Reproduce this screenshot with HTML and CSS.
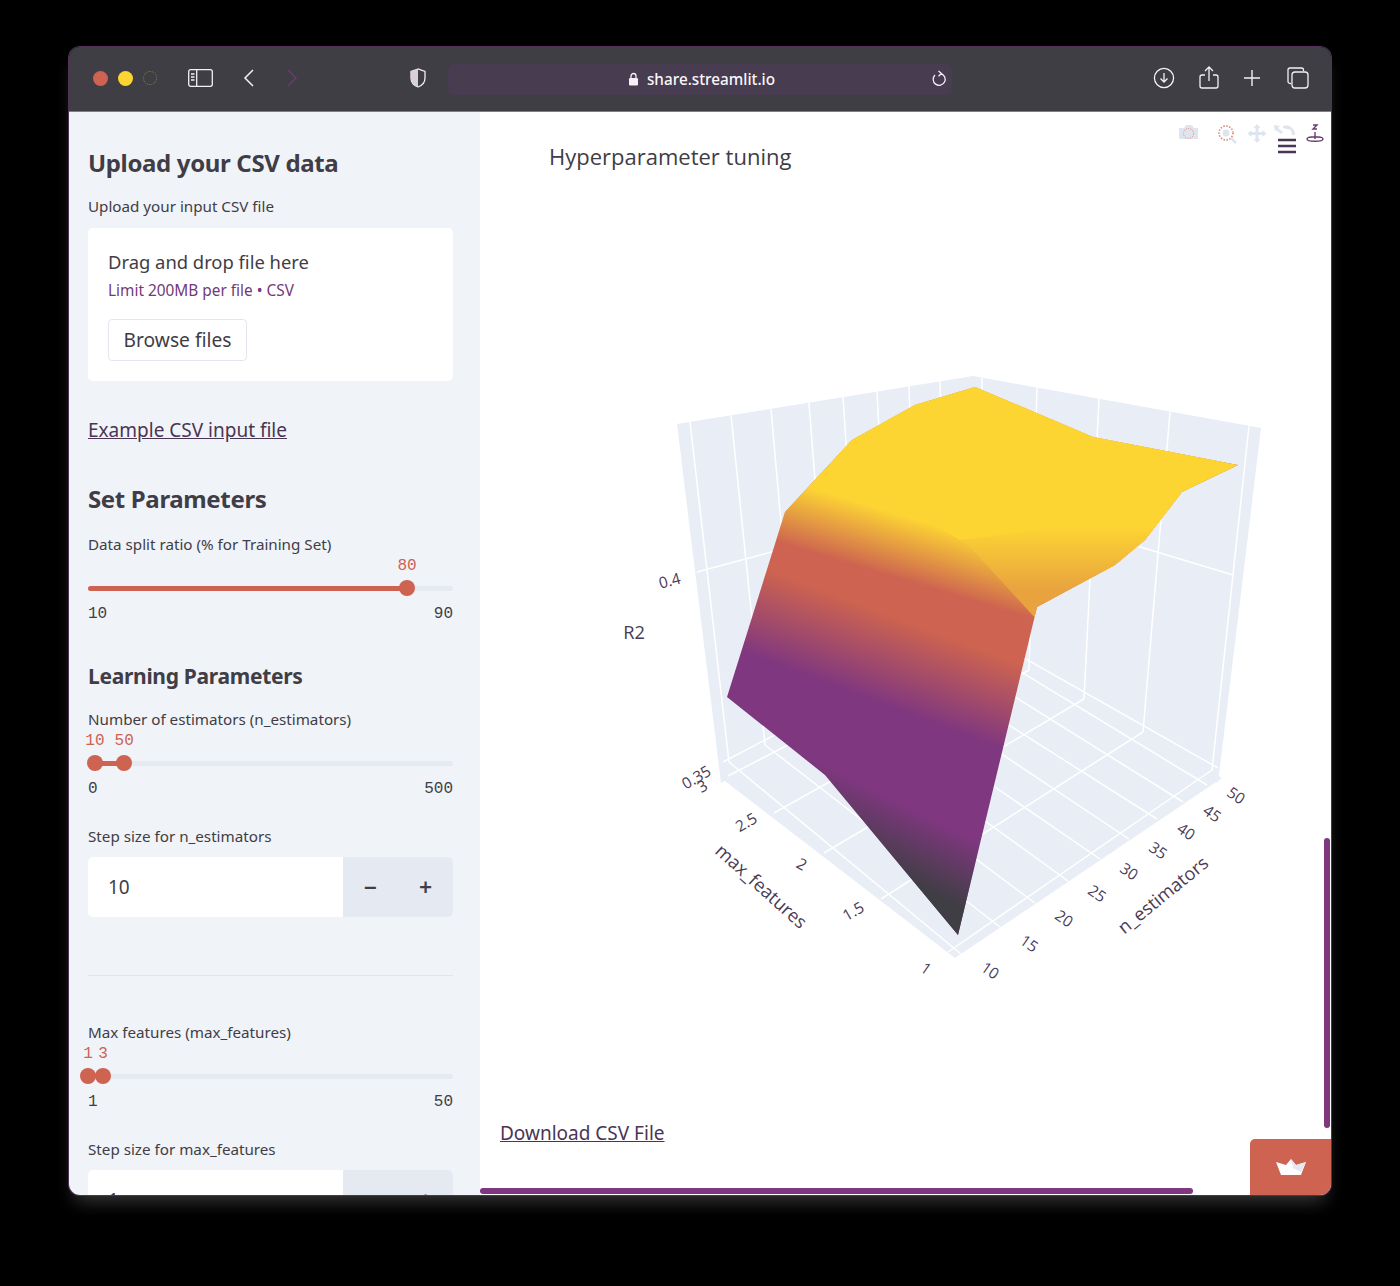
FILE: index.html
```html
<!DOCTYPE html>
<html lang="en">
<head>
<meta charset="utf-8">
<title>Hyperparameter tuning</title>
<link rel="stylesheet" href="styles.css">
</head>
<body>
<div class="window">
  <header class="toolbar">
    <div class="tb-left">
      <div class="traffic">
        <span class="dot dot-red"></span><span class="dot dot-yellow"></span><span class="dot dot-off"></span>
      </div>
      <svg class="ic ic-side" width="25" height="18" viewBox="0 0 25 18"><rect x=".7" y=".7" width="23.6" height="16.6" rx="2" fill="none" stroke="#f4f0f6" stroke-width="1.3"/><path d="M8.7 1v16M3 5h3.5M3 8h3.5M3 11h3.5" stroke="#f4f0f6" stroke-width="1.3" fill="none"/></svg>
      <svg class="ic ic-back" width="12" height="20" viewBox="0 0 12 20"><path d="M10 2 2 10l8 8" fill="none" stroke="#f4f0f6" stroke-width="1.5"/></svg>
      <svg class="ic ic-fwd" width="12" height="20" viewBox="0 0 12 20"><path d="m2 2 8 8-8 8" fill="none" stroke="#6a3a72" stroke-width="1.5"/></svg>
      <svg class="ic ic-shield" width="18" height="20" viewBox="0 0 18 20"><path d="M9 1 2 3.5V10c0 4.500 3 7.500 7 9 4-1.500 7-4.500 7-9V3.500z" fill="#3f3e44" stroke="#f4f0f6" stroke-width="1.3"/><path d="M9 1 2 3.500V10c0 4.500 3 7.500 7 9z" fill="#d9cfd8"/></svg>
    </div>
    <div class="address">
      <svg class="lock" width="11" height="14" viewBox="0 0 11 14"><path d="M3 6V4a2.500 2.500 0 0 1 5 0v2" fill="none" stroke="#f4f0f6" stroke-width="1.3"/><rect x="1" y="6" width="9" height="7.500" rx="1.200" fill="#f4f0f6"/></svg>
      <span class="host">share.streamlit.io</span>
      <svg class="reload" width="16" height="18" viewBox="0 0 16 18"><path d="M10 3.600A6 6 0 1 1 4 5M7.500 1 10.500 3.600 7.500 6.200" fill="none" stroke="#f4f0f6" stroke-width="1.300"/></svg>
    </div>
    <div class="tb-right">
      <svg width="22" height="22" viewBox="0 0 22 22"><circle cx="11" cy="11" r="9.600" fill="none" stroke="#f4f0f6" stroke-width="1.300"/><path d="M11 6v9M7.500 11.500 11 15l3.500-3.500" fill="none" stroke="#f4f0f6" stroke-width="1.300"/></svg>
      <svg width="20" height="24" viewBox="0 0 20 24"><path d="M6 9H3a2 2 0 0 0-2 2v9a2 2 0 0 0 2 2h14a2 2 0 0 0 2-2v-9a2 2 0 0 0-2-2h-3M10 15V1.500M6 5l4-4 4 4" fill="none" stroke="#f4f0f6" stroke-width="1.300"/></svg>
      <svg width="18" height="18" viewBox="0 0 18 18"><path d="M9 1v16M1 9h16" stroke="#f4f0f6" stroke-width="1.400"/></svg>
      <svg class="ic-tabs" width="22" height="22" viewBox="0 0 22 22"><path d="M4 16.500H3a2 2 0 0 1-2-2V3a2 2 0 0 1 2-2h11.500a2 2 0 0 1 2 2v1" fill="none" stroke="#f4f0f6" stroke-width="1.300"/><rect x="5" y="5" width="16" height="16" rx="3" fill="none" stroke="#f4f0f6" stroke-width="1.300"/></svg>
    </div>
  </header>

  <div class="content">
    <aside class="sidebar">
      <h2 class="h-upload">Upload your CSV data</h2>
      <p class="label label-upload">Upload your input CSV file</p>
      <div class="uploader">
        <div class="drag">Drag and drop file here</div>
        <div class="limit">Limit 200MB per file • CSV</div>
        <button class="browse" type="button">Browse files</button>
      </div>
      <a class="example" href="#">Example CSV input file</a>
      <h3 class="h-set">Set Parameters</h3>
      <p class="label label-split">Data split ratio (% for Training Set)</p>
      <div class="slider">
        <div class="values"><span class="val" style="left:87.4%">80</span></div>
        <div class="track">
          <span class="fill" style="left:0;width:87.4%"></span>
          <span class="thumb" style="left:87.4%"></span>
        </div>
        <div class="ends"><span>10</span><span>90</span></div>
      </div>
      <h3 class="h-learn">Learning Parameters</h3>
      <p class="label label-est">Number of estimators (n_estimators)</p>
      <div class="slider">
        <div class="values"><span class="val" style="left:1.9%">10</span><span class="val" style="left:9.9%">50</span></div>
        <div class="track">
          <span class="fill" style="left:1.9%;width:8%"></span>
          <span class="thumb" style="left:1.9%"></span>
          <span class="thumb" style="left:9.9%"></span>
        </div>
        <div class="ends"><span>0</span><span>500</span></div>
      </div>
      <p class="label label-step">Step size for n_estimators</p>
      <div class="number">
        <div class="num-value">10</div>
        <div class="num-btn">−</div>
        <div class="num-btn">+</div>
      </div>
      <hr class="rule">
      <p class="label label-max">Max features (max_features)</p>
      <div class="slider">
        <div class="values"><span class="val" style="left:0">1</span><span class="val" style="left:4.1%">3</span></div>
        <div class="track">
          <span class="thumb" style="left:0"></span>
          <span class="thumb" style="left:4.1%"></span>
        </div>
        <div class="ends"><span>1</span><span>50</span></div>
      </div>
      <p class="label label-step">Step size for max_features</p>
      <div class="number">
        <div class="num-value">1</div>
        <div class="num-btn">−</div>
        <div class="num-btn">+</div>
      </div>
    </aside>

    <main class="main">
      <svg class="plot" width="851" height="1000" viewBox="480 112 851 1000">
        <defs>
          <clipPath id="surf"><path d="M785 512 852 440 915 405 975 387 1093 437 1238 465 1182 492 1145 540 1115 565 1037 607 958 935 825 775 727 697Z"/></clipPath>
          <linearGradient id="gBody" gradientUnits="userSpaceOnUse" x1="880" y1="612" x2="850" y2="692">
            <stop offset="0" stop-color="#cd6350"/><stop offset="1" stop-color="#7f377f"/>
          </linearGradient>
          <linearGradient id="gTop" gradientUnits="userSpaceOnUse" x1="900" y1="514" x2="882" y2="574">
            <stop offset="0" stop-color="#fdd533"/><stop offset="1" stop-color="#fdd533" stop-opacity="0"/>
          </linearGradient>
          <linearGradient id="gRight" gradientUnits="userSpaceOnUse" x1="1060" y1="526" x2="1060" y2="590">
            <stop offset="0" stop-color="#fdd533"/><stop offset="1" stop-color="#e8a33f"/>
          </linearGradient>
          <linearGradient id="gDark" gradientUnits="userSpaceOnUse" x1="935" y1="820" x2="905" y2="880">
            <stop offset="0" stop-color="#3f3e44" stop-opacity="0"/><stop offset="1" stop-color="#3f3e44"/>
          </linearGradient>
        </defs>

        <g class="walls">
          <path d="M677 424 973 376 975 640 721 783Z"/>
          <path d="M973 376 1261 428 1218 783 975 640Z"/>
          <path d="M721 778 975 640 1222 778 955 958Z"/>
        </g>
        <g class="grid">
          <path d="M690 422 729 762M731 415 765 745M771 409 799 727M809 403 833 711M843 397 862 696M877 391 892 681M909 386 919 668M940 381 946 654"/>
          <path d="M982 378 982 644M1037 388 1029 670M1099 399 1084 699M1170 412 1143 732M1249 426 1212 770"/>
          <path d="M697 572 975 497 1233 575M723 762 975 630 1218 768"/>
          <path d="M961 954 729 762M1000 927 765 745M1035 903 799 727M1068 881 833 711M1100 859 862 696M1129 839 892 681M1157 819 919 668M1183 802 946 654M1207 785 972 642"/>
          <path d="M948 952 1212 770M881 899 1143 732M824 853 1084 699M774 813 1029 670M728 776 982 644"/>
        </g>

        <g clip-path="url(#surf)">
          <rect x="700" y="370" width="560" height="580" fill="url(#gBody)"/>
          <rect x="700" y="370" width="560" height="580" fill="url(#gTop)"/>
          <path d="M960 536 1250 500 1250 620 1037 620Z" fill="url(#gRight)"/>
          <rect x="700" y="700" width="300" height="250" fill="url(#gDark)"/>
          <path d="M834 465 850 483 854 500 895 502 960 540 1055 528 1142 528 1250 440 970 370 780 440Z" fill="#fdd533"/>
        </g>

        <text class="title" x="549" y="165">Hyperparameter tuning</text>

        <g class="tick">
          <text transform="translate(671 586) rotate(-15)">0.4</text>
          <text transform="translate(699 782) rotate(-30)">0.35</text>
          <text transform="translate(705 791) rotate(-30)">3</text>
          <text transform="translate(749 827) rotate(-30)">2.5</text>
          <text transform="translate(799 869) rotate(30)">2</text>
          <text transform="translate(856 916) rotate(-30)">1.5</text>
          <text transform="translate(923 973) rotate(35)">1</text>
          <text transform="translate(987 975) rotate(35)">10</text>
          <text transform="translate(1026 948) rotate(35)">15</text>
          <text transform="translate(1061 923) rotate(35)">20</text>
          <text transform="translate(1094 898) rotate(35)">25</text>
          <text transform="translate(1126 876) rotate(35)">30</text>
          <text transform="translate(1155 855) rotate(35)">35</text>
          <text transform="translate(1183 836) rotate(35)">40</text>
          <text transform="translate(1209 818) rotate(35)">45</text>
          <text transform="translate(1233 800) rotate(35)">50</text>
        </g>
        <g class="axis">
          <text x="634" y="639">R2</text>
          <text transform="translate(757 891) rotate(42)">max_features</text>
          <text transform="translate(1167 900) rotate(-39)">n_estimators</text>
        </g>

        <g class="modebar">
          <path d="M1179 128h5l2-3h6l2 3h4v11h-19z"/>
          <circle cx="1188.500" cy="133.500" r="5" fill="none" stroke="#d9836f" stroke-dasharray="1 1.500"/>
          <circle cx="1226" cy="133" r="7" fill="none" stroke="#d9836f" stroke-width="1.500" stroke-dasharray="1.500 1.500"/>
          <circle cx="1226" cy="133" r="3.500"/>
          <path d="M1231 138l5 5" stroke="#dfe5ee" stroke-width="2.500"/>
          <path d="M1257 124l3.500 4h-2v4h4v-2l4 3.500-4 3.500v-2h-4v4h2l-3.500 4-3.500-4h2v-4h-4v2l-4-3.500 4-3.500v2h4v-4h-2z"/>
          <path d="M1274 125l6 1-2 2 5 4-2 2-5-4-1 2zM1283 126a9 9 0 0 1 12 9h-3l-1-5-8-2z"/>
          <path class="turn" d="M1313 125h4l-4 4h4M1315 132v7M1307 139c0-3 16-3 16 0s-16 3-16 0z" fill="none" stroke="#6a3a72" stroke-width="1.400"/>
        </g>
        <path class="burger" d="M1278 140h18M1278 146h18M1278 152h18"/>
      </svg>
      <a class="download" href="#">Download CSV File</a>
      <span class="sb-v"></span>
      <span class="sb-h"></span>
      <div class="crown-btn">
        <svg width="32" height="18" viewBox="0 0 32 18"><path d="M1 4 11 7 16 1 21 7 31 4 26 17H6Z" fill="#fdfdfd"/><path d="M16 1 21 7 31 4 26 14 18 10Z" fill="#e4e8f0"/></svg>
      </div>
    </main>
  </div>
</div>
</body>
</html>
```
FILE: styles.css
```css
* { box-sizing: border-box; }
html, body { margin: 0; background: #000; }
body { padding: 47px 69px 91px; font-family: "Noto Sans", "Open Sans", sans-serif; color: #3f3d46; }

.window {
  width: 1262px;
  height: 1148px;
  border-radius: 11px;
  overflow: hidden;
  display: flex;
  flex-direction: column;
  box-shadow: 0 0 0 1px #52315a, 0 12px 18px -6px rgba(95, 95, 95, .6);
}

/* toolbar */
.toolbar {
  flex: none;
  height: 65px;
  background: #3f3e44;
  border-bottom: 1px solid #cd6350;
  display: grid;
  grid-template-columns: 379px 504px 1fr;
  align-items: center;
}
.tb-left { display: flex; align-items: center; padding: 0 0 2px 24px; }
.traffic { display: flex; gap: 10px; align-items: center; }
.dot { width: 15px; height: 15px; border-radius: 50%; }
.dot-red { background: #cd6350; }
.dot-yellow { background: #fdd533; }
.dot-off { border: 1px dotted #8a7a3a; width: 14px; height: 14px; }
.ic-side { margin-left: 31px; }
.ic-back { margin-left: 30px; }
.ic-fwd { margin-left: 31px; }
.ic-shield { margin-left: 111px; }
.address {
  position: relative;
  height: 31px;
  padding-left: 3px;
  background: #473c50;
  border-radius: 7px;
  display: flex;
  align-items: center;
  justify-content: center;
  gap: 8px;
  color: #f8f6fa;
  font-size: 15.300px;
  font-weight: 500;
}
.reload { position: absolute; right: 5px; top: 6px; }
.tb-right { display: flex; align-items: center; justify-content: flex-end; gap: 24px; padding: 0 22px 2px 0; }
.ic-tabs { margin-left: 2px; }

/* layout */
.content { flex: 1; display: flex; min-height: 0; }
.sidebar {
  flex: none;
  width: 411px;
  height: 100%;
  overflow: hidden;
  background: #f0f3f8;
  padding: 35px 27px 0 19px;
}
.main { flex: 1; position: relative; background: #fff; overflow: hidden; }

/* sidebar text */
h2, h3, p { margin: 0; }
h2, h3 { font-weight: 700; color: #3f3d46; }
.h-upload { font-size: 24px; line-height: 32px; letter-spacing: -.35px; }
.h-set { font-size: 24px; line-height: 30px; margin-top: 41px; letter-spacing: -.35px; }
.h-learn { font-size: 21px; line-height: 30px; margin-top: 37px; letter-spacing: -.3px; }
.label { font-size: 15.200px; line-height: 20px; }
.label-upload { margin-top: 17px; }
.label-split { margin-top: 20px; }
.label-est { margin-top: 18px; }
.label-step { margin-top: 27px; }
.label-max { margin-top: 46px; }

.uploader {
  margin-top: 12px;
  background: #fff;
  border-radius: 5px;
  padding: 21px 20px 20px;
}
.drag { font-size: 18.400px; line-height: 26px; }
.limit { font-size: 15.400px; line-height: 20px; margin-top: 6px; color: #73387a; }
.browse {
  display: block;
  margin-top: 18px;
  width: 139px;
  height: 42px;
  padding: 0;
  background: #fff;
  border: 1px solid #e3e6ec;
  border-radius: 4px;
  color: #3f3d46;
  font: 19.200px/1 "Noto Sans", sans-serif;
}
.example, .download {
  display: block;
  color: #4a3555;
  text-decoration: underline;
  font-size: 19px;
  line-height: 26px;
}
.example { margin-top: 36px; width: max-content; }

/* sliders */
.slider { margin-top: 1px; font-family: "Liberation Mono", monospace; font-size: 16px; }
.values { position: relative; height: 20px; }
.val { position: absolute; top: 1px; line-height: 20px; transform: translateX(-50%); color: #cd6350; }
.track { position: relative; height: 16px; margin-top: 5px; }
.track::before {
  content: "";
  position: absolute;
  left: 0; right: 0; top: 6px;
  height: 5px;
  border-radius: 3px;
  background: #e5e9f0;
}
.fill { position: absolute; top: 6px; height: 5px; background: #cd6350; border-radius: 3px; }
.thumb {
  position: absolute;
  top: 0;
  width: 16px;
  height: 16px;
  margin-left: -8px;
  border-radius: 50%;
  background: #cd6350;
}
.ends { display: flex; justify-content: space-between; margin-top: 8px; line-height: 20px; }

/* number input */
.number { display: flex; margin-top: 11px; height: 60px; background: #fff; border-radius: 5px; overflow: hidden; }
.num-value { flex: 1; padding-left: 20px; font-size: 19px; line-height: 60px; }
.num-btn {
  width: 55px;
  background: #e5e9f1;
  text-align: center;
  font-size: 23px;
  font-weight: 600;
  line-height: 60px;
}
.rule { margin: 58px 0 0; border: 0; height: 1px; background: #e3e6ec; }

/* plot */
.plot { display: block; }
.walls path { fill: #e8edf6; }
.grid path { fill: none; stroke: #fff; stroke-width: 1.500; }
.title { font: 22px "Open Sans", sans-serif; fill: #3f3d46; }
.tick text { font: 15.500px "Open Sans", sans-serif; fill: #4a3a55; text-anchor: middle; }
.axis text { font: 18.300px "Open Sans", sans-serif; fill: #4a3a55; text-anchor: middle; }
.modebar path, .modebar circle { fill: #dfe5ee; }
.modebar path.turn, .modebar circle[fill="none"] { fill: none; }
.burger { fill: none; stroke: #4a3555; stroke-width: 2.500; }

.download { margin: 8px 0 0 20px; width: max-content; }

.sb-v { position: absolute; right: 1px; top: 726px; width: 6px; height: 290px; border-radius: 3px; background: #7f377f; }
.sb-h { position: absolute; left: 0; bottom: 1px; width: 713px; height: 6px; border-radius: 3px; background: #7f377f; }
.crown-btn {
  position: absolute;
  right: 0;
  bottom: 0;
  width: 81px;
  height: 56px;
  background: #cd6350;
  border-radius: 5px 0 0 0;
  display: flex;
  align-items: center;
  justify-content: center;
}
```
